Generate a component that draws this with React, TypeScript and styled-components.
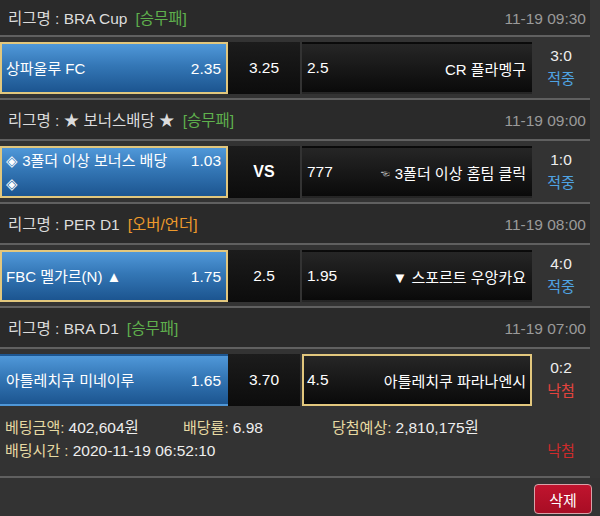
import React from 'react';
import styled, { createGlobalStyle } from 'styled-components';

const GlobalStyle = createGlobalStyle`
  html, body { margin: 0; padding: 0; }
  body {
    background: #353535;
    font-family: "Liberation Sans", Arial, "Noto Sans CJK KR", sans-serif;
    font-size: 15px;
    color: #eeeeee;
    width: 600px;
    height: 516px;
    overflow: hidden;
  }
`;

const Page = styled.div`
  width: 600px;
  display: flex;
  flex-direction: column;
`;

const List = styled.div`
  width: 590px;
  background: #333333;
  display: flex;
  flex-direction: column;
`;

const LeagueHeader = styled.div<{ $first?: boolean }>`
  box-sizing: border-box;
  height: ${(p) => (p.$first ? 37 : 43)}px;
  border-top: ${(p) => (p.$first ? 'none' : '2px solid #606060')};
  border-bottom: 2px solid #606060;
  background: #2a2a2a;
  display: flex;
  align-items: center;
  justify-content: space-between;
  padding: 2px 4px 0 8px;
  line-height: 20px;
`;

const LeagueTitle = styled.div`
  color: #dcdcdc;
  white-space: nowrap;
  font-size: 15.5px;
`;

const MarketTag = styled.span<{ $color: string }>`
  color: ${(p) => p.$color};
  margin-left: 8px;
`;

const KickOff = styled.div`
  color: #9a9a9a;
  font-size: 15.5px;
`;

const MatchRow = styled.div`
  height: 61px;
  box-sizing: border-box;
  padding: 5px 0 4px;
  display: grid;
  grid-template-columns: 228px 72px 232px 58px;
`;

const HomeCell = styled.div<{ $picked: boolean }>`
  box-sizing: border-box;
  display: flex;
  align-items: center;
  padding: 0 5px 0 4px;
  background: linear-gradient(to bottom, #5098d9 0%, #3477b6 45%, #1c5590 100%);
  border: 2px solid ${(p) => (p.$picked ? '#e2c77d' : 'transparent')};
  color: #ffffff;
  line-height: 23px;
`;

const HomeText = styled.div`
  flex: 1;
`;

const Odds = styled.span`
  float: right;
  margin-left: 14px;
  font-size: 15.5px;
`;

const DrawCell = styled.div<{ $bold?: boolean }>`
  display: flex;
  align-items: center;
  justify-content: center;
  background: linear-gradient(to bottom, #1c1c1c, #0c0c0c);
  color: #ffffff;
  font-weight: ${(p) => (p.$bold ? 700 : 400)};
  font-size: ${(p) => (p.$bold ? 16 : 15.5)}px;
`;

const AwayCell = styled.div<{ $picked: boolean }>`
  box-sizing: border-box;
  margin-left: 2px;
  display: flex;
  align-items: center;
  justify-content: space-between;
  padding: 0 4px 0 3px;
  background: linear-gradient(to bottom, #262626, #0a0a0a);
  border: 2px solid ${(p) => (p.$picked ? '#e2c77d' : 'transparent')};
  color: #ffffff;
`;

const AwayOdds = styled.span`
  font-size: 15.5px;
`;

const Hand = styled.span`
  font-size: 9px;
  color: #b8b8b8;
  margin-right: 5px;
  vertical-align: 2px;
`;

const ScoreCell = styled.div`
  display: flex;
  flex-direction: column;
  align-items: center;
  justify-content: center;
  line-height: 23px;
  padding-bottom: 2px;
`;

const Score = styled.div`
  color: #eeeeee;
  font-size: 15.5px;
`;

const ResultText = styled.div<{ $win: boolean }>`
  color: ${(p) => (p.$win ? '#4fa3e3' : '#e5433e')};
`;

const BetSummary = styled.div`
  width: 590px;
  box-sizing: border-box;
  padding: 6px 0 14px 5px;
  border-bottom: 2px solid #606060;
  background: #333333;
  line-height: 23px;
`;

const SummaryRow = styled.div<{ $cols: string }>`
  display: grid;
  grid-template-columns: ${(p) => p.$cols};
`;

const Label = styled.span`
  color: #e6d9a2;
`;

const Value = styled.span`
  color: #eeeeee;
  font-size: 15.5px;
`;

const LostMark = styled.span`
  color: #cf2b2b;
  text-align: center;
`;

const Footer = styled.div`
  height: 38px;
  box-sizing: border-box;
  padding: 6px 8px 0 0;
  display: flex;
  justify-content: flex-end;
  align-items: flex-start;
  background: #333333;
`;

const DeleteButton = styled.button`
  width: 58px;
  height: 30px;
  border: 1px solid #d9a1a8;
  border-radius: 4px;
  background: linear-gradient(to bottom, #c0142e, #a80d24);
  color: #ffffff;
  font-family: inherit;
  font-size: 15px;
  padding: 0;
  cursor: pointer;
`;

type Match = {
  league: string;
  market: string;
  marketColor: string;
  time: string;
  home: string;
  homeOdds: string;
  draw: string;
  drawBold?: boolean;
  awayOdds: string;
  away: string;
  hand?: boolean;
  pick: 'home' | 'away';
  score: string;
  win: boolean;
};

const matches: Match[] = [
  {
    league: '리그명 : BRA Cup',
    market: '[승무패]',
    marketColor: '#5fb04d',
    time: '11-19 09:30',
    home: '상파울루 FC',
    homeOdds: '2.35',
    draw: '3.25',
    awayOdds: '2.5',
    away: 'CR 플라멩구',
    pick: 'home',
    score: '3:0',
    win: true,
  },
  {
    league: '리그명 : ★ 보너스배당 ★',
    market: '[승무패]',
    marketColor: '#5fb04d',
    time: '11-19 09:00',
    home: '◈ 3폴더 이상 보너스 배당 ◈',
    homeOdds: '1.03',
    draw: 'VS',
    drawBold: true,
    awayOdds: '777',
    away: '3폴더 이상 홈팀 클릭',
    hand: true,
    pick: 'home',
    score: '1:0',
    win: true,
  },
  {
    league: '리그명 : PER D1',
    market: '[오버/언더]',
    marketColor: '#ee9a2c',
    time: '11-19 08:00',
    home: 'FBC 멜가르(N) ▲',
    homeOdds: '1.75',
    draw: '2.5',
    awayOdds: '1.95',
    away: '▼ 스포르트 우앙카요',
    pick: 'home',
    score: '4:0',
    win: true,
  },
  {
    league: '리그명 : BRA D1',
    market: '[승무패]',
    marketColor: '#5fb04d',
    time: '11-19 07:00',
    home: '아틀레치쿠 미네이루',
    homeOdds: '1.65',
    draw: '3.70',
    awayOdds: '4.5',
    away: '아틀레치쿠 파라나엔시',
    pick: 'away',
    score: '0:2',
    win: false,
  },
];

export default function App() {
  return (
    <Page>
      <GlobalStyle />
      <List>
        {matches.map((m, i) => (
          <React.Fragment key={i}>
            <LeagueHeader $first={i === 0}>
              <LeagueTitle>
                {m.league}
                <MarketTag $color={m.marketColor}>{m.market}</MarketTag>
              </LeagueTitle>
              <KickOff>{m.time}</KickOff>
            </LeagueHeader>
            <MatchRow>
              <HomeCell $picked={m.pick === 'home'}>
                <HomeText>
                  <Odds>{m.homeOdds}</Odds>
                  {m.home}
                </HomeText>
              </HomeCell>
              <DrawCell $bold={m.drawBold}>{m.draw}</DrawCell>
              <AwayCell $picked={m.pick === 'away'}>
                <AwayOdds>{m.awayOdds}</AwayOdds>
                <span>
                  {m.hand && <Hand>☜</Hand>}
                  {m.away}
                </span>
              </AwayCell>
              <ScoreCell>
                <Score>{m.score}</Score>
                <ResultText $win={m.win}>{m.win ? '적중' : '낙첨'}</ResultText>
              </ScoreCell>
            </MatchRow>
          </React.Fragment>
        ))}
      </List>
      <BetSummary>
        <SummaryRow $cols="178px 149px 1fr">
          <span>
            <Label>베팅금액: </Label>
            <Value>402,604원</Value>
          </span>
          <span>
            <Label>배당률: </Label>
            <Value>6.98</Value>
          </span>
          <span>
            <Label>당첨예상: </Label>
            <Value>2,810,175원</Value>
          </span>
        </SummaryRow>
        <SummaryRow $cols="1fr 58px">
          <span>
            <Label>배팅시간 : </Label>
            <Value>2020-11-19 06:52:10</Value>
          </span>
          <LostMark>낙첨</LostMark>
        </SummaryRow>
      </BetSummary>
      <Footer>
        <DeleteButton>삭제</DeleteButton>
      </Footer>
    </Page>
  );
}
